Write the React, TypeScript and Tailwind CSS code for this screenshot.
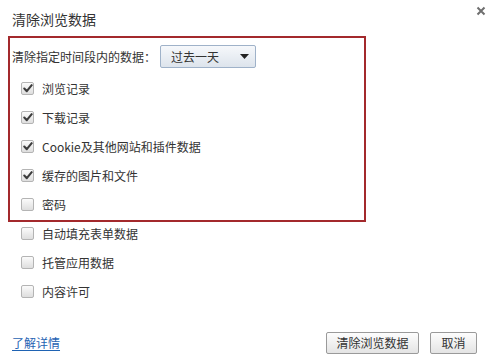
import type { ReactNode } from "react";

const FONT = { fontFamily: '"Noto Sans CJK SC", "Noto Sans", sans-serif' };

const INSIDE = [
    { label: "浏览记录", checked: true },
    { label: "下载记录", checked: true },
    { label: "Cookie及其他网站和插件数据", checked: true },
    { label: "缓存的图片和文件", checked: true },
    { label: "密码", checked: false },
];

const OUTSIDE = [
    { label: "自动填充表单数据", checked: false },
    { label: "托管应用数据", checked: false },
    { label: "内容许可", checked: false },
];

const Checkbox = ({ checked }: { checked: boolean }) => (
    <span className="w-[13px] h-[13px] shrink-0 rounded-[2px] border border-[#b4b4b4] bg-gradient-to-b from-[#fbfbfb] to-[#dedede] flex items-center justify-center">
        {checked && (
            <svg width="10" height="9" viewBox="0 0 10 9">
                <path d="M1.3 4.6 L3.8 7.2 L8.7 1.2" fill="none" stroke="#3c3c3c" strokeWidth="2.1" strokeLinecap="round" strokeLinejoin="round" />
            </svg>
        )}
    </span>
);

const Row = ({ label, checked }: { label: string; checked: boolean }) => (
    <div className="h-[29px] flex items-center gap-[8px]">
        <Checkbox checked={checked} />
        <span className="text-[12px] leading-[16px] text-[#333]">{label}</span>
    </div>
);

const Button = ({ children, className }: { children: ReactNode; className: string }) => (
    <button className={`h-[22px] rounded-[2px] border border-[#9a9a9a] bg-gradient-to-b from-[#fdfdfd] to-[#e4e4e4] text-[12px] leading-[16px] text-[#333] ${className}`}>
        {children}
    </button>
);

export default function App() {
    return (
        <div className="relative w-[493px] h-[361px] bg-white flex flex-col" style={FONT}>
            {/* close */}
            <button className="absolute left-[476px] top-[6px] w-[10px] h-[10px]">
                <svg width="10" height="10" viewBox="0 0 10 10">
                    <path d="M1.5 1.5 L8.5 8.5 M8.5 1.5 L1.5 8.5" stroke="#6f6f6f" strokeWidth="2" />
                </svg>
            </button>

            <h1 className="pt-[9px] pl-[12px] text-[14px] leading-[20px] text-[#333]">清除浏览数据</h1>

            {/* highlighted section */}
            <div className="mt-[7px] ml-[8px] w-[358px] border-2 border-[#a3292c] pt-[7px] pb-[1px]">
                <div className="flex items-center pl-[2px] h-[23px]">
                    <span className="text-[12px] leading-[16px] text-[#333]">清除指定时间段内的数据：</span>
                    <div className="ml-[4px] w-[96px] h-[23px] rounded-[2px] border border-[#9fb2c9] bg-gradient-to-b from-[#f6f8fb] to-[#dde4ec] flex items-center justify-between pl-[10px] pr-[6px]">
                        <span className="text-[12px] leading-[16px] text-[#333]">过去一天</span>
                        <svg width="9" height="5" viewBox="0 0 9 5">
                            <path d="M0 0 H9 L4.5 5 Z" fill="#222" />
                        </svg>
                    </div>
                </div>
                <div className="mt-[6px] pl-[11px] flex flex-col">
                    {INSIDE.map((item) => (
                        <Row key={item.label} label={item.label} checked={item.checked} />
                    ))}
                </div>
            </div>

            <div className="-mt-[3px] pl-[21px] flex flex-col">
                {OUTSIDE.map((item) => (
                    <Row key={item.label} label={item.label} checked={item.checked} />
                ))}
            </div>

            {/* footer */}
            <div className="mt-[26px] pl-[12px] pr-[16px] flex items-center justify-between">
                <a href="#" className="text-[12px] leading-[16px] text-[#1f63b3] underline underline-offset-2">了解详情</a>
                <div className="flex gap-[11px]">
                    <Button className="w-[93px]">清除浏览数据</Button>
                    <Button className="w-[47px]">取消</Button>
                </div>
            </div>
        </div>
    );
}
